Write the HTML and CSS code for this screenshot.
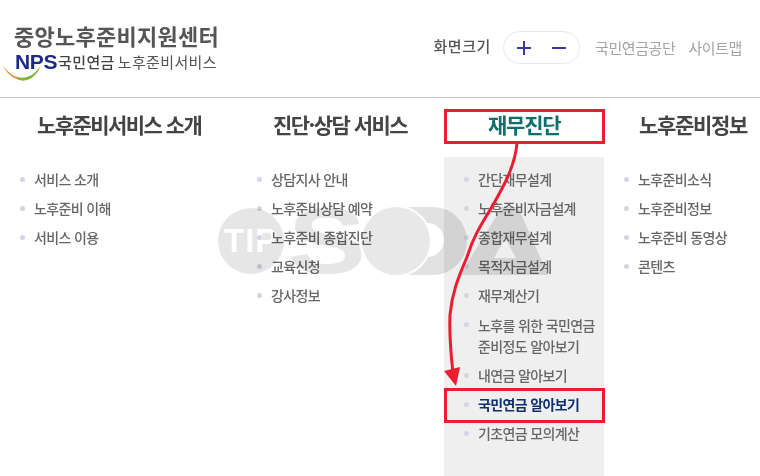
FILE: index.html
```html
<!DOCTYPE html>
<html lang="ko">
<head>
<meta charset="utf-8">
<title>중앙노후준비지원센터</title>
<link rel="stylesheet" href="styles.css">
</head>
<body>
<div class="page">
  <header class="header">
    <div class="brand">
      <div class="brand-title">중앙노후준비지원센터</div>
      <div class="brand-sub">
        <span class="nps">NPS
          <svg class="swoosh" width="44" height="18" viewBox="0 0 44 18"><path d="M1 0 C6 9 16 14 24 14 C19 17 6 13 1 0Z" fill="#ee8a1e"/><path d="M15 12 C24 15 34 9 39 0 C35 12 24 19 15 14Z" fill="#7db83a"/></svg>
        </span>
        <span class="sub-dark">국민연금</span>
        <span class="sub-light">노후준비서비스</span>
      </div>
    </div>
    <div class="tools">
      <span class="zoom-label">화면크기</span>
      <div class="zoom-pill">
        <svg width="16" height="16" viewBox="0 0 16 16"><path d="M1 8H15M8 1V15" stroke="#3a3aa5" stroke-width="2" fill="none"/></svg>
        <svg width="16" height="16" viewBox="0 0 16 16"><path d="M1 8H15" stroke="#3a3aa5" stroke-width="2" fill="none"/></svg>
      </div>
      <a class="tool-link">국민연금공단</a>
      <a class="tool-link">사이트맵</a>
    </div>
  </header>

  <nav class="nav">
    <section class="col col-1">
      <h2 class="col-title">노후준비서비스 소개</h2>
      <ul class="menu">
        <li>서비스 소개</li>
        <li>노후준비 이해</li>
        <li>서비스 이용</li>
      </ul>
    </section>
    <section class="col col-2">
      <h2 class="col-title">진단·상담 서비스</h2>
      <ul class="menu">
        <li>상담지사 안내</li>
        <li>노후준비상담 예약</li>
        <li>노후준비 종합진단</li>
        <li>교육신청</li>
        <li>강사정보</li>
      </ul>
    </section>
    <section class="col col-3">
      <h2 class="col-title col-title-active">재무진단</h2>
      <ul class="menu menu-active">
        <li>간단재무설계</li>
        <li>노후준비자금설계</li>
        <li>종합재무설계</li>
        <li>목적자금설계</li>
        <li>재무계산기</li>
        <li class="two-line">노후를 위한 국민연금<br>준비정도 알아보기</li>
        <li>내연금 알아보기</li>
        <li class="current">국민연금 알아보기</li>
        <li>기초연금 모의계산</li>
      </ul>
    </section>
    <section class="col col-4">
      <h2 class="col-title">노후준비정보</h2>
      <ul class="menu">
        <li>노후준비소식</li>
        <li>노후준비정보</li>
        <li>노후준비 동영상</li>
        <li>콘텐츠</li>
      </ul>
    </section>
  </nav>

  <svg class="watermark" width="340" height="72" viewBox="0 0 340 72">
    <circle cx="33" cy="35" r="33" fill="#e6e6e6"/>
    <text x="6" y="46" class="wm-text">TIP</text>
    <text x="70" y="67" class="wm-s" textLength="78" lengthAdjust="spacingAndGlyphs">S</text>
    <path d="M178 1H215A34 34 0 0 1 215 69H178Z" fill="#e2e2e2"/>
    <circle cx="209" cy="34" r="17" fill="#fff"/>
    <circle cx="178" cy="35" r="36" fill="#fff"/>
    <circle cx="178" cy="35" r="34" fill="#e8e8e8"/>
    <path d="M242 69L284 1H300L330 69ZM287 32L276 52H298Z" fill="#e2e2e2" fill-rule="evenodd"/>
  </svg>

  <div class="callout callout-top"></div>
  <div class="callout callout-bottom"></div>
  <svg class="arrow" width="90" height="250" viewBox="0 0 90 250">
    <path d="M76 0 C74 25 60 48 49 67 C38 85 32 95 26 114 C17 135 11 150 9 172 C8 195 10 212 12 230" fill="none" stroke="#ee1c2e" stroke-width="3"/>
    <path d="M3 228 L19 224 L15 243Z" fill="#ee1c2e"/>
  </svg>
</div>
</body>
</html>
```
FILE: styles.css
```css
* { box-sizing: border-box; }
html, body { margin: 0; padding: 0; background: #fff; }
body {
  font-family: "Noto Sans CJK KR", "Noto Sans", sans-serif;
  color: #555;
}
.page {
  position: relative;
  width: 760px;
  height: 476px;
  overflow: hidden;
}
.header {
  height: 98px;
  border-bottom: 1px solid #c9c9c9;
  display: flex;
  justify-content: space-between;
  align-items: flex-start;
}
.brand { padding: 20px 0 0 2px; }
.brand-title {
  padding-left: 12px;
  font-size: 22px;
  line-height: 30px;
  font-weight: 700;
  color: #555;
  letter-spacing: 0.25px;
}
.brand-sub {
  display: flex;
  align-items: center;
  height: 23px;
}
.nps {
  position: relative;
  width: 56px;
  padding-left: 13px;
  font-family: "Liberation Sans", sans-serif;
  font-size: 21px;
  line-height: 22px;
  font-weight: 700;
  color: #1d2a87;
  letter-spacing: -0.3px;
}
.swoosh { position: absolute; left: 0; top: 14px; }
.sub-dark {
  font-size: 15px;
  font-weight: 500;
  color: #444;
  letter-spacing: 0.4px;
  margin-right: 3px;
}
.sub-light {
  font-size: 15px;
  color: #555;
  letter-spacing: 0.35px;
}
.tools {
  display: flex;
  align-items: center;
  padding: 31px 18px 0 0;
}
.zoom-label {
  position: relative;
  top: -2px;
  font-size: 15px;
  font-weight: 500;
  color: #555;
  letter-spacing: 0.6px;
  margin-right: 12px;
}
.zoom-pill {
  width: 77px;
  height: 33px;
  border: 1px solid #e8e8e8;
  border-radius: 17px;
  display: flex;
  align-items: center;
  justify-content: center;
  gap: 19px;
  margin-right: 15px;
}
.tool-link {
  font-size: 15px;
  color: #a4a4a4;
  letter-spacing: -0.4px;
  margin-right: 13px;
}
.tool-link:last-child { margin-right: 0; }

.nav {
  display: grid;
  grid-template-columns: 238px 206px 160px 156px;
  height: 378px;
}
.col-title {
  margin: 0;
  height: 59px;
  padding-top: 11px;
  font-size: 21px;
  line-height: 30px;
  font-weight: 700;
  color: #444;
  letter-spacing: -1.55px;
  white-space: nowrap;
}
.col-title-active { color: #0f6f6f; padding-left: 44px; letter-spacing: -1.2px; }
.col-1 .col-title { padding-left: 37px; }
.col-2 .col-title { padding-left: 35px; }
.col-4 .col-title { padding-left: 35px; letter-spacing: -1.3px; }
.menu {
  list-style: none;
  margin: 0;
  padding: 8px 0 0;
  height: 319px;
}
.col-1 .menu { padding-left: 34px; }
.col-2 .menu { padding-left: 33px; }
.col-3 .menu { padding-left: 34px; }
.col-4 .menu { padding-left: 34px; }
.menu-active { background: #efeff0; }
.menu li {
  position: relative;
  font-size: 14px;
  line-height: 29px;
  height: 29px;
  color: #666;
  letter-spacing: -0.65px;
  white-space: nowrap;
  font-weight: 500;
}
.menu li::before {
  content: "";
  position: absolute;
  left: -14px;
  top: 12px;
  width: 5px;
  height: 5px;
  border-radius: 50%;
  background: #d4d5e2;
}
.menu li.two-line {
  height: 51px;
  line-height: 21px;
  padding-top: 5px;
}
.menu li.current { color: #12306f; font-weight: 700; }

.watermark {
  position: absolute;
  left: 218px;
  top: 206px;
  mix-blend-mode: multiply;
  pointer-events: none;
}
.wm-text {
  font-family: "Liberation Sans", sans-serif;
  font-size: 33px;
  font-weight: 700;
  fill: #fff;
  letter-spacing: 1px;
}
.wm-s {
  font-family: "Liberation Sans", sans-serif;
  font-size: 92px;
  font-weight: 700;
  fill: #e6e6e6;
}
.callout {
  position: absolute;
  left: 444px;
  width: 161px;
  border: 3px solid #ee1c2e;
  pointer-events: none;
}
.callout-top { top: 109px; height: 35px; }
.callout-bottom { top: 388px; height: 35px; }
.arrow {
  position: absolute;
  left: 441px;
  top: 143px;
  pointer-events: none;
}
```
